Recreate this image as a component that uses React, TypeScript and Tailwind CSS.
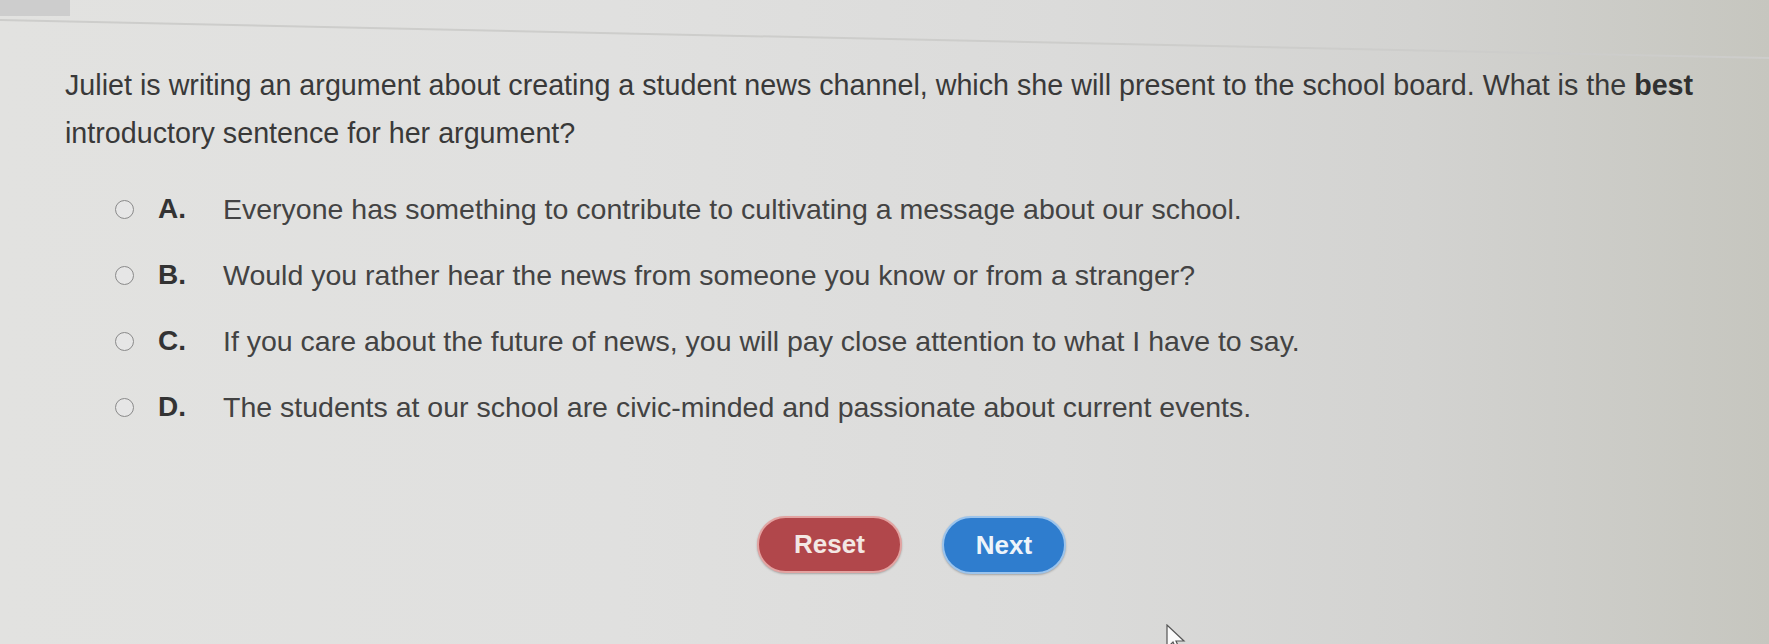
import React from "react";

const options = [
  { l: "A.", t: "Everyone has something to contribute to cultivating a message about our school." },
  { l: "B.", t: "Would you rather hear the news from someone you know or from a stranger?" },
  { l: "C.", t: "If you care about the future of news, you will pay close attention to what I have to say." },
  { l: "D.", t: "The students at our school are civic-minded and passionate about current events." },
];

export default function App() {
  return (
    <div
      className="relative h-[644px] w-full overflow-hidden bg-[linear-gradient(90deg,#e2e2e0_0%,#e0e0df_35%,#dbdbda_60%,#d3d3d1_80%,#c6c6bf_100%)]"
      style={{ fontFamily: '"Liberation Sans", Arial, sans-serif' }}
    >
      <div className="absolute left-0 top-0 h-[16px] w-[70px] bg-[#cdcdcd]" />
      <svg className="pointer-events-none absolute left-0 top-0" width="1769" height="70">
        <line x1="0" y1="20" x2="1769" y2="58" stroke="#cdcdcb" strokeWidth="2" />
      </svg>

      <div className="pl-[65px] pr-[30px] pt-[61px]">
        <p className="whitespace-nowrap text-[28.7px] leading-[48px] text-[#393939]">
          Juliet is writing an argument about creating a student news channel, which she will present to the school board. What is the <b className="font-bold text-[#303030]">best</b>
          <br />
          introductory sentence for her argument?
        </p>

        <div className="mt-[19px] pl-[50px]">
          {options.map((o) => (
            <div key={o.l} className="flex h-[66px] items-center">
              <span className="h-[19px] w-[19px] shrink-0 rounded-full border-[1.5px] border-[#8a8a8a] bg-[#e6e6e6]" />
              <span className="ml-[24px] w-[65px] shrink-0 text-[28px] font-bold text-[#333]">{o.l}</span>
              <span className="whitespace-nowrap text-[28.5px] text-[#434343]">{o.t}</span>
            </div>
          ))}
        </div>
      </div>

      <div className="mt-[76px] flex justify-center gap-[40px] pl-[54px]">
        <button className="flex h-[57px] w-[145px] items-center justify-center rounded-full border-2 border-[#e3a3a1] bg-[#b1474b] text-[26px] font-bold text-[#f3e8e4] shadow-[0_1px_2px_rgba(0,0,0,0.25)]">
          Reset
        </button>
        <button className="flex h-[58px] w-[124px] items-center justify-center rounded-full border-2 border-[#9cc4ec] bg-[#2f7dce] text-[26px] font-bold text-[#eef4fa] shadow-[0_1px_2px_rgba(0,0,0,0.25)]">
          Next
        </button>
      </div>

      <svg className="absolute left-[1166px] top-[624px]" width="24" height="30" viewBox="0 0 24 30">
        <path d="M1 1 L1 24 L7 18 L11 27 L14 26 L10 17 L18 17 Z" fill="#fafafa" stroke="#555" strokeWidth="1.2" />
      </svg>
    </div>
  );
}
